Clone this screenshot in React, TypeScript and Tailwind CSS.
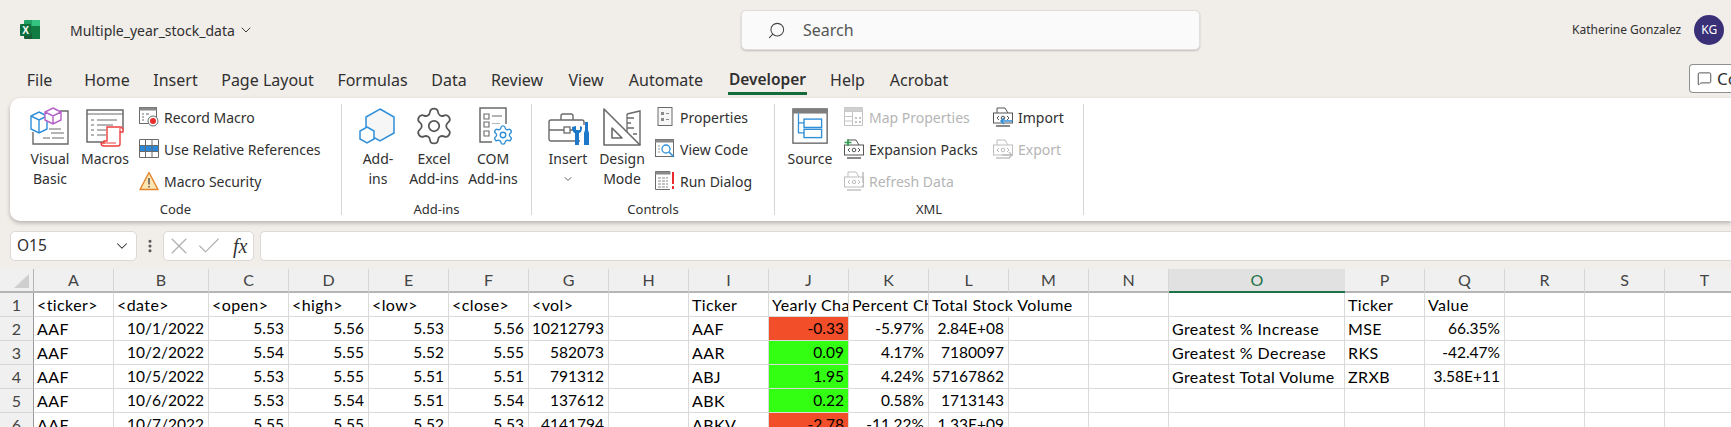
import { ReactNode } from "react";
import { Check, ChevronDown, EllipsisVertical, MessageSquare, Search, Settings, X } from "lucide-react";

const gray = "#6a6a6a";
const blue = "#2f8fd8";

function ExcelLogo() {
  return (
    <svg width="22" height="22" viewBox="0 0 22 22">
      <path d="M6 1h14a1 1 0 0 1 1 1v5H5V2a1 1 0 0 1 1-1z" fill="#21a366" />
      <rect x="13" y="7" width="8" height="7" fill="#107c41" />
      <rect x="5" y="7" width="8" height="7" fill="#107c41" />
      <path d="M5 14h16v5a1 1 0 0 1-1 1H6a1 1 0 0 1-1-1z" fill="#185c37" />
      <rect x="13" y="1" width="8" height="6" fill="#33c481" />
      <rect x="13" y="14" width="8" height="6" fill="#107c41" />
      <rect x="1" y="5" width="11" height="12" rx="1" fill="#0f6f3c" />
      <text x="6.5" y="14.5" textAnchor="middle" fontSize="10" fontWeight="700" fill="#fff" fontFamily="Liberation Sans, sans-serif">
        X
      </text>
    </svg>
  );
}

function VisualBasicIcon() {
  return (
    <svg width="42" height="42" viewBox="0 0 42 42" fill="none">
      <path d="M4 27v12h35V6h-8" stroke={gray} strokeWidth="1.4" />
      <path d="M20 24h12M22 28h13M14 33h7M23 33h12" stroke={gray} strokeWidth="1.2" />
      <path d="M10 7l8 4v13l-8 4-8-4V11zM2 11l8 4 8-4M10 15v13" fill="#fff" stroke={blue} strokeWidth="1.4" />
      <path d="M24 3l8 4v8l-8 4-8-4V7zM16 7l8 4 8-4M24 11v8" fill="#fff" stroke="#b55fc8" strokeWidth="1.4" />
    </svg>
  );
}

function MacrosIcon() {
  return (
    <svg width="42" height="42" viewBox="0 0 42 42" fill="none">
      <path d="M21 37H3V5h36v20" stroke={gray} strokeWidth="1.5" />
      <path d="M3 9h36" stroke={gray} strokeWidth="1.2" />
      <path d="M7 15h3M13 15h20M7 20h3M13 20h16M7 25h3M13 25h9M7 30h3M13 30h9" stroke={gray} strokeWidth="1.1" />
      <path d="M23 22h14l2 2v3h-3v12c0 2-1 2-2 2H20c-2 0-3-1-3-3h3v-2h3z" fill="#fff" stroke="#ee3c3c" strokeWidth="1.4" />
      <path d="M36 23v4M20 38h12" stroke="#ee3c3c" strokeWidth="1.1" />
    </svg>
  );
}

function AddInsIcon() {
  return (
    <svg width="38" height="38" viewBox="0 0 38 38">
      <path d="M21 2l14 8v16l-14 8-14-8V10z" fill="#f6f6f6" stroke={blue} strokeWidth="1.5" />
      <path d="M8 20l7 4v8l-7 4-7-4v-8z" fill="#fff" stroke={blue} strokeWidth="1.5" />
    </svg>
  );
}

function ComIcon() {
  return (
    <div className="relative ml-[3px] h-[38px] w-[36px]">
      <svg width="36" height="38" viewBox="0 0 36 38" fill="none">
        <path d="M20 35H3V1h26v18" stroke={gray} strokeWidth="1.5" />
        <path d="M7 7h5v5H7zM7 15h5v5H7zM7 24h5v5H7z" stroke={gray} strokeWidth="1.1" />
        <path d="M15 9h10M15 17h8" stroke={gray} strokeWidth="1.2" />
      </svg>
      <Settings size={22} strokeWidth={1.5} className="absolute left-[15px] top-[17px] bg-white text-[#2f8fd8]" />
    </div>
  );
}

function ToolboxIcon() {
  return (
    <svg width="42" height="38" viewBox="0 0 42 38" fill="none" className="ml-[2px] mt-[5px]">
      <path d="M32 31H3a2 2 0 0 1-2-2V12a2 2 0 0 1 2-2h31a2 2 0 0 1 2 2v3" stroke={gray} strokeWidth="1.4" />
      <path d="M13 10V6a2 2 0 0 1 2-2h8a2 2 0 0 1 2 2v4M1 20h15M22 20h5" stroke={gray} strokeWidth="1.4" />
      <rect x="16" y="17" width="6" height="6" stroke={gray} strokeWidth="1.3" />
      <path d="M24 17c0 4 2 6 3 6v12h4V23c2 0 3-3 3-6l-2-1v4h-4v-4z" fill="#1d78c9" />
      <path d="M37 12h3v8l1 3v12h-5V23l1-3z" fill="#1d78c9" />
    </svg>
  );
}

function SetSquareIcon() {
  return (
    <svg width="38" height="38" viewBox="0 0 38 38" fill="none" className="mt-[2px]">
      <path d="M1 1l36 36H1zM9 20l10 10H9z" stroke={gray} strokeWidth="1.6" strokeLinejoin="round" />
      <path d="M24 6l13-3v34" stroke={gray} strokeWidth="1.4" />
      <path d="M24 6v18M24 10h7M24 15h4M24 20h7M30 26h4" stroke={gray} strokeWidth="1.3" />
    </svg>
  );
}

function SourceIcon() {
  return (
    <svg width="37" height="37" viewBox="0 0 40 40" fill="none" className="ml-[1px]">
      <rect x="1" y="1" width="37" height="37" fill="#fff" stroke={gray} strokeWidth="1.5" />
      <rect x="1" y="1" width="37" height="5" fill="#7e7e7e" />
      <path d="M7 6v21h6M7 16h6" stroke={blue} strokeWidth="1.4" />
      <rect x="13" y="12" width="19" height="9" stroke={blue} strokeWidth="1.5" />
      <rect x="13" y="23" width="19" height="9" stroke={blue} strokeWidth="1.5" />
    </svg>
  );
}

function RecordIcon() {
  return (
    <svg width="20" height="20" viewBox="0 0 20 20" fill="none">
      <rect x="0.5" y="0.5" width="17" height="16" stroke={gray} />
      <rect x="0.5" y="0.5" width="17" height="3" fill="#8a8a8a" />
      <path d="M3 7h2M7 7h3M3 10h2M3 13h2" stroke={gray} />
      <circle cx="14" cy="14" r="5" fill="#fff" stroke={gray} />
      <circle cx="14" cy="14" r="3" fill="#e92b2b" />
    </svg>
  );
}

function RelativeIcon() {
  return (
    <svg width="20" height="20" viewBox="0 0 20 20" fill="none">
      <rect x="0.5" y="6" width="19" height="6" fill="#2b88d8" />
      <path d="M0.5 0.5h19v18h-19zM0.5 6.5h19M0.5 12.5h19M6.5 0.5v18M13 0.5v18" stroke={gray} />
    </svg>
  );
}

function WarningIcon() {
  return (
    <svg width="20" height="20" viewBox="0 0 20 20" fill="none">
      <path d="M10 1.5l9 17H1z" fill="#fbe6b2" stroke="#e2822a" strokeWidth="1.4" strokeLinejoin="round" />
      <path d="M10 7v6.5M10 15v1.5" stroke="#555" strokeWidth="1.5" />
    </svg>
  );
}

function PropertiesIcon() {
  return (
    <svg width="20" height="20" viewBox="0 0 20 20" fill="none">
      <rect x="3" y="0.5" width="14" height="18" fill="#f7f7f7" stroke={gray} />
      <path d="M6 5h3v3H6zM6 11h3v3H6z" fill="#8a8a8a" />
      <path d="M11 6.5h3M11 12.5h3" stroke="#8a8a8a" />
    </svg>
  );
}

function ViewCodeIcon() {
  return (
    <svg width="20" height="20" viewBox="0 0 20 20" fill="none">
      <rect x="0.5" y="0.5" width="18" height="17" stroke={gray} />
      <rect x="0.5" y="0.5" width="18" height="3" fill="#8a8a8a" />
      <path d="M3 7h2M3 10h2M3 13h2" stroke="#999" />
      <circle cx="11" cy="10" r="4" fill="#fff" stroke={blue} strokeWidth="1.3" />
      <path d="M14 13l5 5" stroke={blue} strokeWidth="1.6" />
    </svg>
  );
}

function RunDialogIcon() {
  return (
    <svg width="20" height="20" viewBox="0 0 20 20" fill="none">
      <path d="M15 18.5H0.5v-18H15" stroke={gray} />
      <rect x="0.5" y="0.5" width="15" height="3" fill="#8a8a8a" />
      <path d="M3 7h10M3 10h10M3 13h10M3 16h10" stroke="#8a8a8a" strokeDasharray="3 1" />
      <path d="M18 1v12M18 15v3" stroke="#e92b2b" strokeWidth="2" />
    </svg>
  );
}

function MapPropsIcon() {
  return (
    <svg width="20" height="20" viewBox="0 0 20 20" fill="none">
      <path d="M0.5 0.5h18v18h-18zM0.5 4.5h18M0.5 9.5h8M0.5 14h8M8.5 4.5v14" stroke="#c4c4c4" />
      <rect x="0.5" y="0.5" width="18" height="4" fill="#cfcfcf" />
      <path d="M11 10h2v2h-2zM15 10h2v2h-2zM11 14h2v2h-2zM15 14h2v2h-2z" fill="#c4c4c4" />
    </svg>
  );
}

function XmlIcon({ color, kind }: { color: string; kind?: "plus" | "refresh" | "import" | "export" }) {
  return (
    <svg width="20" height="20" viewBox="0 0 20 20" fill="none">
      <path d="M4 6V1h8l3 5" stroke={color} />
      <rect x="0.5" y="6" width="19" height="10" stroke={color} />
      <path d="M3 19h14" stroke={color} strokeWidth="1.4" />
      <path d="M6 9l-2 2 2 2M14 9l2 2-2 2" stroke={color} />
      <circle cx="10" cy="11" r="1.8" stroke={color} />
      {kind === "plus" && <path d="M4 0v7M0.5 3.5h7" stroke="#2aa14a" strokeWidth="1.4" />}
      {kind === "refresh" && <path d="M19 1v11M19 14v2" stroke={color} strokeWidth="1.5" />}
      {kind === "import" && <path d="M19.5 14H8M11 11l-3 3 3 3" stroke={blue} strokeWidth="1.5" />}
      {kind === "export" && <path d="M9 16h10M16 13l3 3-3 3" stroke={color} strokeWidth="1.3" />}
    </svg>
  );
}

function LargeBtn({ className, icon, lines }: { className: string; icon: ReactNode; lines: ReactNode[] }) {
  return (
    <div className={`${className} flex flex-col items-center pt-[5px] text-[14px] leading-[20px] text-[#303030]`}>
      <div className="flex h-[46px] items-center justify-center">{icon}</div>
      {lines.map((line, i) => (
        <div key={i} className="flex h-[20px] items-center whitespace-nowrap">
          {line}
        </div>
      ))}
    </div>
  );
}

function SmallBtn({ icon, label, disabled }: { icon: ReactNode; label: string; disabled?: boolean }) {
  return (
    <div className={`flex h-[32px] items-center gap-[5px] whitespace-nowrap text-[14px] ${disabled ? "text-[#b5b5b5]" : "text-[#303030]"}`}>
      <div className="h-[20px] w-[20px] shrink-0">{icon}</div>
      {label}
    </div>
  );
}

function Group({ className, label, children }: { className: string; label: string; children: ReactNode }) {
  return (
    <div className={`${className} flex shrink-0 flex-col`}>
      <div className="flex h-[102px]">{children}</div>
      <div className="h-[18px] text-center text-[13px] leading-[18px] text-[#303030]">{label}</div>
    </div>
  );
}

function Sep() {
  return <div className="my-[6px] w-px shrink-0 bg-[#d6d6d6]" />;
}

const tabs = [
  { name: "File", cls: "w-[25px] mr-[32px]" },
  { name: "Home", cls: "w-[46px] mr-[24px]" },
  { name: "Insert", cls: "w-[43px] mr-[24px]" },
  { name: "Page Layout", cls: "w-[93px] mr-[24px]" },
  { name: "Formulas", cls: "w-[69px] mr-[25px]" },
  { name: "Data", cls: "w-[34px] mr-[25px]" },
  { name: "Review", cls: "w-[52px] mr-[25px]" },
  { name: "View", cls: "w-[36px] mr-[24px]" },
  { name: "Automate", cls: "w-[76px] mr-[24px]" },
  { name: "Developer", cls: "w-[79px] mr-[23px]" },
  { name: "Help", cls: "w-[35px] mr-[24px]" },
  { name: "Acrobat", cls: "w-[60px]" },
];

const colNames = ["A", "B", "C", "D", "E", "F", "G", "H", "I", "J", "K", "L", "M", "N", "O", "P", "Q", "R", "S", "T"];

const rows: string[][] = [
  ["<ticker>", "<date>", "<open>", "<high>", "<low>", "<close>", "<vol>", "", "Ticker", "Yearly Change", "Percent Change", "Total Stock Volume", "", "", "", "Ticker", "Value", "", "", ""],
  ["AAF", "10/1/2022", "5.53", "5.56", "5.53", "5.56", "10212793", "", "AAF", "-0.33", "-5.97%", "2.84E+08", "", "", "Greatest % Increase", "MSE", "66.35%", "", "", ""],
  ["AAF", "10/2/2022", "5.54", "5.55", "5.52", "5.55", "582073", "", "AAR", "0.09", "4.17%", "7180097", "", "", "Greatest % Decrease", "RKS", "-42.47%", "", "", ""],
  ["AAF", "10/5/2022", "5.53", "5.55", "5.51", "5.51", "791312", "", "ABJ", "1.95", "4.24%", "57167862", "", "", "Greatest Total Volume", "ZRXB", "3.58E+11", "", "", ""],
  ["AAF", "10/6/2022", "5.53", "5.54", "5.51", "5.54", "137612", "", "ABK", "0.22", "0.58%", "1713143", "", "", "", "", "", "", "", ""],
  ["AAF", "10/7/2022", "5.55", "5.55", "5.52", "5.53", "4141794", "", "ABKV", "-2.78", "-11.22%", "1.33E+09", "", "", "", "", "", "", "", ""],
];

function SheetCell({ value, row, col }: { value: string; row: number; col: number }) {
  const numeric = row > 0 && /^-?[\d./%E+]+$/.test(value);
  let fill = "";
  if (col === 9 && row > 0) fill = value.startsWith("-") ? "bg-[#f24e2a]" : "bg-[#33ff12]";
  const spill = row === 0 && col === 11;
  return (
    <div
      className={`h-[24px] whitespace-nowrap border-b border-[#dadada] leading-[23px] ${fill} ${
        numeric ? "pr-[4px] text-right text-[15.5px]" : "pl-[3px] text-left text-[16px] tracking-[0.4px]"
      } ${spill ? "overflow-visible" : "overflow-hidden border-r"}`}
    >
      {value}
    </div>
  );
}

export default function App() {
  return (
    <div className="h-[427px] w-[1731px] overflow-hidden bg-[#f1ede9] [font-family:'Noto_Sans',sans-serif]">
      {/* Title bar */}
      <div className="flex h-[64px] items-start">
        <div className="ml-[19px] mt-[19px] h-[22px] w-[22px]">
          <ExcelLogo />
        </div>
        <div className="ml-[29px] mt-[20px] flex h-[20px] w-[671px] items-center gap-[3px] text-[14px] text-[#303030]">
          Multiple_year_stock_data
          <ChevronDown size={16} strokeWidth={1.4} />
        </div>
        <div className="mt-[10px] flex h-[40px] w-[459px] items-center rounded-[5px] border border-[#e2dedb] bg-[#fafafa] pl-[25px] text-[16px] text-[#555] shadow-[0_1px_2px_rgba(0,0,0,0.2)]">
          <Search size={19} strokeWidth={1.3} className="-scale-x-100 text-[#444]" />
          <span className="ml-[17px]">Search</span>
        </div>
        <div className="ml-[372px] mt-[20px] h-[20px] whitespace-nowrap text-[12px] leading-[20px] text-[#303030]">Katherine Gonzalez</div>
        <div className="ml-[13px] mt-[15px] flex h-[30px] w-[30px] shrink-0 items-center justify-center rounded-full bg-[#3a3078] text-[12px] text-white">KG</div>
      </div>

      {/* Tabs */}
      <div className="flex h-[34px] items-start pl-[27px] text-[16px] text-[#303030]">
        {tabs.map((tab) => (
          <div
            key={tab.name}
            className={`${tab.cls} relative flex h-[31px] shrink-0 items-center justify-center whitespace-nowrap ${tab.name === "Developer" ? "text-[15.5px] font-semibold" : ""}`}
          >
            {tab.name}
            {tab.name === "Developer" && <div className="absolute bottom-0 left-0 right-0 h-[3px] bg-[#146c3c]" />}
          </div>
        ))}
        <div className="ml-[740px] flex h-[29px] w-[44px] shrink-0 items-center overflow-hidden rounded-l-[4px] border border-r-0 border-[#8f8f8f] bg-white pl-[7px] text-[17px] text-[#303030]">
          <MessageSquare size={15} strokeWidth={1.3} className="mr-[5px] shrink-0" />
          Co
        </div>
      </div>

      {/* Ribbon */}
      <div className="ml-[10px] flex h-[123px] rounded-l-[10px] bg-white shadow-[0_2px_4px_rgba(0,0,0,0.25)]">
        <Group className="w-[331px]" label="Code">
          <div className="w-[10px]" />
          <LargeBtn className="w-[60px]" icon={<VisualBasicIcon />} lines={["Visual", "Basic"]} />
          <LargeBtn className="w-[50px]" icon={<MacrosIcon />} lines={["Macros"]} />
          <div className="ml-[9px] pt-[3px]">
            <SmallBtn icon={<RecordIcon />} label="Record Macro" />
            <SmallBtn icon={<RelativeIcon />} label="Use Relative References" />
            <SmallBtn icon={<WarningIcon />} label="Macro Security" />
          </div>
        </Group>
        <Sep />
        <Group className="w-[189px]" label="Add-ins">
          <div className="w-[11px]" />
          <LargeBtn className="w-[50px]" icon={<AddInsIcon />} lines={["Add-", "ins"]} />
          <LargeBtn className="w-[62px]" icon={<Settings size={42} strokeWidth={1} className="text-[#555]" />} lines={["Excel", "Add-ins"]} />
          <LargeBtn className="w-[56px]" icon={<ComIcon />} lines={["COM", "Add-ins"]} />
        </Group>
        <Sep />
        <Group className="w-[242px]" label="Controls">
          <div className="w-[14px]" />
          <LargeBtn className="w-[44px]" icon={<ToolboxIcon />} lines={["Insert", <ChevronDown key="c" size={12} strokeWidth={1.5} />]} />
          <LargeBtn className="w-[64px]" icon={<SetSquareIcon />} lines={["Design", "Mode"]} />
          <div className="ml-[1px] pt-[3px]">
            <SmallBtn icon={<PropertiesIcon />} label="Properties" />
            <SmallBtn icon={<ViewCodeIcon />} label="View Code" />
            <SmallBtn icon={<RunDialogIcon />} label="Run Dialog" />
          </div>
        </Group>
        <Sep />
        <Group className="w-[308px]" label="XML">
          <div className="w-[5px]" />
          <LargeBtn className="w-[60px]" icon={<SourceIcon />} lines={["Source"]} />
          <div className="ml-[4px] w-[149px] pt-[3px]">
            <SmallBtn icon={<MapPropsIcon />} label="Map Properties" disabled />
            <SmallBtn icon={<XmlIcon color="#555" kind="plus" />} label="Expansion Packs" />
            <SmallBtn icon={<XmlIcon color="#bdbdbd" kind="refresh" />} label="Refresh Data" disabled />
          </div>
          <div className="pt-[3px]">
            <SmallBtn icon={<XmlIcon color="#555" kind="import" />} label="Import" />
            <SmallBtn icon={<XmlIcon color="#bdbdbd" kind="export" />} label="Export" disabled />
          </div>
        </Group>
        <Sep />
      </div>

      {/* Formula bar */}
      <div className="ml-[10px] mt-[10px] flex h-[30px]">
        <div className="flex w-[127px] items-center justify-between rounded-[5px] border border-[#dcd8d5] bg-white pl-[6px] pr-[5px] text-[15.5px] text-[#303030]">
          O15
          <ChevronDown size={18} strokeWidth={1.4} />
        </div>
        <div className="flex w-[26px] items-center justify-center">
          <EllipsisVertical size={16} strokeWidth={2.6} className="text-[#555]" />
        </div>
        <div className="flex w-[91px] items-center rounded-[5px] border border-[#dcd8d5] bg-white pl-[1px]">
          <X size={28} strokeWidth={1} className="text-[#b0b0b0]" />
          <Check size={28} strokeWidth={1} className="ml-[2px] text-[#b0b0b0]" />
          <span className="ml-[10px] text-[20px] italic text-[#333] [font-family:'Liberation_Serif',serif]">fx</span>
        </div>
        <div className="ml-[6px] flex-1 rounded-l-[5px] border border-r-0 border-[#dcd8d5] bg-white" />
      </div>

      {/* Sheet */}
      <div className="mt-[8px] grid grid-cols-[34px_80px_95px_80px_80px_80px_80px_80px_80px_80px_80px_80px_80px_80px_80px_176px_80px_80px_80px_80px_80px] bg-white text-black [font-family:'Lato',sans-serif]">
        <div className="relative h-[24px] border-b-2 border-r border-[#b5b5b5] bg-[#f0f0f0]">
          <svg width="16" height="14" viewBox="0 0 16 14" className="absolute right-[3px] top-[5px]">
            <path d="M15 0v14H0z" fill="#cfcfcf" />
          </svg>
        </div>
        {colNames.map((c) => (
          <div
            key={c}
            className={`flex h-[24px] items-center justify-center border-b-2 text-[16px] ${
              c === "O" ? "border-[#1f7246] bg-[#e1e1e1] text-[#1f7246]" : "border-r border-[#b5b5b5] border-r-[#d6d6d6] bg-[#f0f0f0] text-[#444]"
            }`}
          >
            {c}
          </div>
        ))}
        {rows.map((row, r) => (
          <div key={r} className="contents">
            <div className="flex h-[24px] items-center justify-center border-b border-r border-[#d6d6d6] border-r-[#9a9a9a] bg-[#f0f0f0] text-[16px] text-[#444]">{r + 1}</div>
            {row.map((value, c) => (
              <SheetCell key={c} value={value} row={r} col={c} />
            ))}
          </div>
        ))}
      </div>
    </div>
  );
}
